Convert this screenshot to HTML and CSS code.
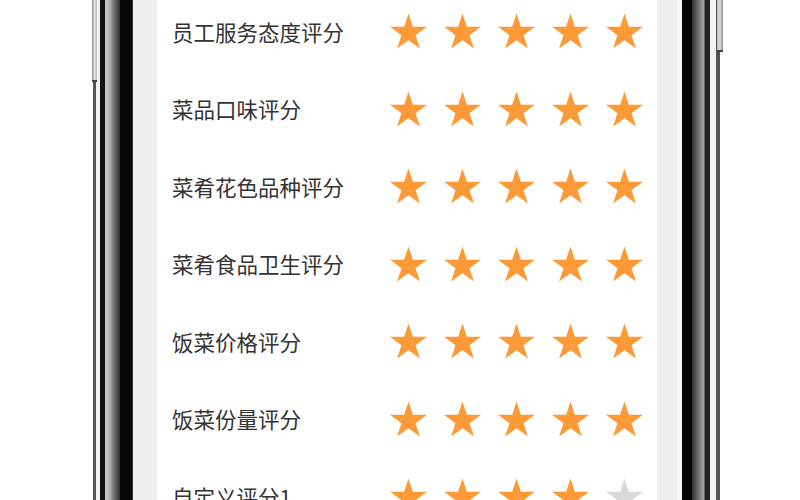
FILE: index.html
```html
<!DOCTYPE html>
<html lang="zh-CN">
<head>
    <meta charset="UTF-8">
    <title>评分</title>
    <link rel="stylesheet" href="styles.css">
</head>
<body>
    <div class="phone">
        <div class="screen">
            <div class="card" id="rateList"></div>
        </div>
    </div>

    <script>
        const items = [
            ['员工服务态度评分', 5],
            ['菜品口味评分', 5],
            ['菜肴花色品种评分', 5],
            ['菜肴食品卫生评分', 5],
            ['饭菜价格评分', 5],
            ['饭菜份量评分', 5],
            ['自定义评分1', 4]
        ];

        const starSvg = '<svg class="star" viewBox="0.95 0 37.1 35.3" width="37" height="36">' +
            '<polygon points="19.5,0 23.88,13.47 38.05,13.47 26.58,21.8 30.96,35.28 19.5,26.95 8.04,35.28 12.42,21.8 0.95,13.47 15.12,13.47"/></svg>';

        const list = document.getElementById('rateList');
        items.forEach(item => {
            const row = document.createElement('div');
            row.className = 'row';
            const label = document.createElement('span');
            label.className = 'label';
            label.textContent = item[0];
            const stars = document.createElement('div');
            stars.className = 'stars';
            for (let i = 0; i < 5; i++) {
                stars.innerHTML += starSvg;
                if (i >= item[1]) {
                    stars.lastChild.classList.add('off');
                }
            }
            row.appendChild(label);
            row.appendChild(stars);
            list.appendChild(row);
        });
    </script>
</body>
</html>
```

FILE: styles.css
```css
body {
    margin: 0;
    padding: 0;
    background-color: white;
    font-family: "Noto Sans CJK SC", "Noto Sans", sans-serif;
    overflow: hidden;
}
.phone {
    position: relative;
    display: flex;
    box-sizing: border-box;
    width: 627px;
    height: 500px;
    margin-left: 93px;
    padding: 0 43px 0 40px;
    background: linear-gradient(to right,
        #555 0, #555 3px,
        #f4f4f4 3px, #f4f4f4 7px,
        #111 7px, #111 12px,
        #c8c8c8 12px, #b0b0b0 17px,
        #8a8a8a 19px, #303030 27px,
        #050505 27px, #050505 39px,
        #333 39px, #333 40px,
        #f8f8f8 calc(100% - 43px), #f8f8f8 calc(100% - 38px),
        #050505 calc(100% - 38px), #050505 calc(100% - 28px),
        #303030 calc(100% - 28px), #a8a8a8 calc(100% - 16px),
        #222 calc(100% - 15px), #222 calc(100% - 10px),
        #f4f4f4 calc(100% - 10px), #f4f4f4 calc(100% - 4px),
        #555 calc(100% - 4px), #555 100%);
}
.phone::before {
    content: "";
    position: absolute;
    left: -1px;
    top: 0;
    width: 5px;
    height: 80px;
    background: linear-gradient(to right, #888, #e2e2e2, #b8b8b8);
    border-bottom: 2px solid #444;
}
.phone::after {
    content: "";
    position: absolute;
    right: -3px;
    top: 0;
    width: 6px;
    height: 50px;
    background: linear-gradient(to right, #b8b8b8, #e2e2e2, #888);
    border-bottom: 2px solid #444;
}
.screen {
    flex: 1;
    background-color: #efefef;
    padding: 0 20px 0 24px;
    overflow: hidden;
}
.card {
    background-color: white;
    margin-top: -7.75px;
}
.row {
    display: flex;
    align-items: center;
    justify-content: space-between;
    height: 77.5px;
    padding: 0 14px 0 15px;
}
.label {
    font-size: 21.5px;
    color: #333;
}
.stars {
    display: flex;
    gap: 17px;
}
.star {
    display: block;
    fill: #fd9a38;
}
.star.off {
    fill: #d9d9d9;
}
```
